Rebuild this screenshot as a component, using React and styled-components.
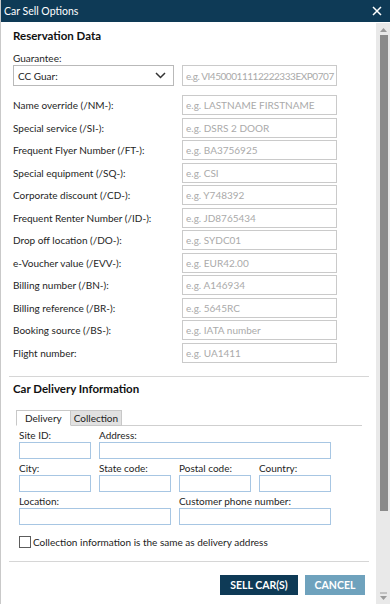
import React, { useState } from 'react';
import styled, { createGlobalStyle } from 'styled-components';

const GlobalStyle = createGlobalStyle`
  html, body {
    margin: 0;
    padding: 0;
    background: #ffffff;
  }
  * {
    box-sizing: border-box;
  }
`;

const FONT = `Lato, "Noto Sans", sans-serif`;
const NAVY = '#0e3a56';

// --- Styled Components ---

const Dialog = styled.div`
  width: 390px;
  height: 604px;
  display: flex;
  flex-direction: column;
  background: #ffffff;
  border-left: 1px solid #c9c9c9;
  font-family: ${FONT};
  color: #222;
  overflow: hidden;
`;

const TitleBar = styled.div`
  height: 22px;
  flex-shrink: 0;
  background: ${NAVY};
  display: flex;
  align-items: center;
  justify-content: space-between;
  padding: 0 6px 0 3px;
  color: #fff;
  font-size: 10.5px;
`;

const CloseButton = styled.button`
  width: 14px;
  height: 14px;
  padding: 0;
  border: none;
  background: transparent;
  display: flex;
  align-items: center;
  justify-content: center;
  cursor: pointer;
`;

const Body = styled.div`
  flex: 1;
  min-height: 0;
  display: flex;
`;

const Content = styled.div`
  flex: 1;
  min-width: 0;
  display: flex;
  flex-direction: column;
  overflow: hidden;
`;

const Section = styled.section`
  padding: ${(p) => p.$pad || '0 0 0 12px'};
  display: flex;
  flex-direction: column;
`;

const Heading = styled.h2`
  margin: 0;
  font-size: 11.5px;
  font-weight: 700;
  line-height: 16px;
  color: #111;
`;

const FieldLabel = styled.div`
  font-size: 10px;
  line-height: 14px;
  color: #1e1e1e;
  white-space: nowrap;
`;

const GuaranteeRow = styled.div`
  display: flex;
  gap: 8px;
  margin-bottom: 9px;
`;

const SelectBox = styled.div`
  position: relative;
  width: 161px;
  height: 21px;
  border: 1px solid #b9b9b9;
  display: flex;
  align-items: center;
  padding: 0 4px;
  font-size: 10px;
  color: #222;
`;

const Chevron = styled.svg`
  position: absolute;
  right: 7px;
  top: 6px;
`;

const TextField = styled.input`
  width: ${(p) => p.$w || 155}px;
  height: ${(p) => p.$h || 20}px;
  border: 1px solid ${(p) => (p.$blue ? '#a7c6e3' : '#cacaca')};
  padding: 0 1px 0 3px;
  margin: 0;
  font-family: ${FONT};
  font-size: 10px;
  letter-spacing: ${(p) => (p.$tight ? '-0.45px' : '0')};
  color: #222;
  background: #fff;
  outline: none;

  &::placeholder {
    color: #aaaaaa;
  }
`;

const FieldGrid = styled.div`
  display: grid;
  grid-template-columns: 169px 155px;
  row-gap: 2.5px;
  align-items: center;
`;

const Divider = styled.hr`
  margin: 0 7px 0 8px;
  border: none;
  border-top: 1px solid #d6d6d6;
  height: 0;
`;

const TabStrip = styled.div`
  display: flex;
  align-items: flex-end;
  margin: 12px 14px 0 3px;
  border-bottom: 1px solid #cfcfcf;
  height: 17px;
`;

const Tab = styled.button`
  height: 16px;
  margin-bottom: -1px;
  padding: 0 ${(p) => (p.$active ? 8 : 3)}px;
  border: 1px solid #c8c8c8;
  border-left-width: ${(p) => (p.$active ? 1 : 0)}px;
  border-bottom-color: ${(p) => (p.$active ? '#fff' : '#c8c8c8')};
  background: ${(p) => (p.$active ? '#fff' : '#e1e1e1')};
  font-family: ${FONT};
  font-size: 10px;
  line-height: 14px;
  color: #222;
  cursor: pointer;
`;

const TabPanel = styled.div`
  padding: 2px 0 0 6px;
  display: grid;
  grid-template-columns: repeat(4, 72px);
  column-gap: 8px;
`;

const Cell = styled.div`
  grid-column: span ${(p) => p.$span || 1};
  display: flex;
  flex-direction: column;
  margin-bottom: 2px;
`;

const CheckRow = styled.label`
  display: flex;
  align-items: center;
  gap: 2px;
  margin: 8px 0 0 6px;
  font-size: 10px;
  line-height: 14px;
  color: #222;
  cursor: pointer;
`;

const CheckBox = styled.span`
  width: 12px;
  height: 12px;
  border: 1px solid #5c5c5c;
  background: #fff;
`;

const Footer = styled.div`
  display: flex;
  justify-content: flex-end;
  gap: 7px;
  padding: 13px 11px 0 0;
`;

const ActionButton = styled.button`
  height: 20px;
  width: ${(p) => p.$w}px;
  border: none;
  padding: 0;
  background: ${(p) => (p.$primary ? NAVY : '#6fa2bd')};
  color: #fff;
  font-family: ${FONT};
  font-weight: 700;
  font-size: 10.5px;
  cursor: pointer;
`;

const Scrollbar = styled.div`
  width: 14px;
  flex-shrink: 0;
  margin-top: 1px;
  background: #e9e9e9;
  display: flex;
  flex-direction: column;
  align-items: center;
  padding: 5px 0 4px 1px;
`;

const Thumb = styled.div`
  width: 8px;
  height: 476px;
  margin-top: 3px;
  background: #8b8b8b;
`;

const Spacer = styled.div`
  flex: 1;
`;

const reservationFields = [
  ['Name override (/NM-):', 'e.g. LASTNAME FIRSTNAME'],
  ['Special service (/SI-):', 'e.g. DSRS 2 DOOR'],
  ['Frequent Flyer Number (/FT-):', 'e.g. BA3756925'],
  ['Special equipment (/SQ-):', 'e.g. CSI'],
  ['Corporate discount (/CD-):', 'e.g. Y748392'],
  ['Frequent Renter Number (/ID-):', 'e.g. JD8765434'],
  ['Drop off location (/DO-):', 'e.g. SYDC01'],
  ['e-Voucher value (/EVV-):', 'e.g. EUR42.00'],
  ['Billing number (/BN-):', 'e.g. A146934'],
  ['Billing reference (/BR-):', 'e.g. 5645RC'],
  ['Booking source (/BS-):', 'e.g. IATA number'],
  ['Flight number:', 'e.g. UA1411'],
];

const deliveryFields = [
  ['Site ID:', 1, 72],
  ['Address:', 3, 232],
  ['City:', 1, 72],
  ['State code:', 1, 72],
  ['Postal code:', 1, 72],
  ['Country:', 1, 72],
  ['Location:', 2, 152],
  ['Customer phone number:', 2, 152],
];

const App = () => {
  const [tab, setTab] = useState('delivery');

  return (
    <>
      <GlobalStyle />
      <Dialog>
        <TitleBar>
          <span>Car Sell Options</span>
          <CloseButton aria-label="Close">
            <svg width="10" height="10" viewBox="0 0 10 10">
              <path d="M1 1 L9 9 M9 1 L1 9" stroke="#fff" strokeWidth="1.5" />
            </svg>
          </CloseButton>
        </TitleBar>
        <Body>
          <Content>
            <Section $pad="6px 0 0 12px">
              <Heading>Reservation Data</Heading>
              <FieldLabel style={{ marginTop: 7 }}>Guarantee:</FieldLabel>
              <GuaranteeRow>
                <SelectBox>
                  CC Guar:
                  <Chevron width="11" height="7" viewBox="0 0 11 7">
                    <path d="M1 1 L5.5 5.5 L10 1" fill="none" stroke="#333" strokeWidth="1.5" />
                  </Chevron>
                </SelectBox>
                <TextField $h={21} $tight placeholder="e.g. VI4500011112222333EXP0707" />
              </GuaranteeRow>
              <FieldGrid>
                {reservationFields.map(([label, hint]) => (
                  <React.Fragment key={label}>
                    <FieldLabel>{label}</FieldLabel>
                    <TextField placeholder={hint} />
                  </React.Fragment>
                ))}
              </FieldGrid>
            </Section>

            <Divider style={{ marginTop: 13 }} />

            <Section $pad="4px 0 0 12px">
              <Heading>Car Delivery Information</Heading>
              <TabStrip>
                <Tab $active={tab === 'delivery'} onClick={() => setTab('delivery')}>
                  Delivery
                </Tab>
                <Tab $active={tab === 'collection'} onClick={() => setTab('collection')}>
                  Collection
                </Tab>
              </TabStrip>
              <TabPanel>
                {deliveryFields.map(([label, span, w]) => (
                  <Cell key={label} $span={span}>
                    <FieldLabel>{label}</FieldLabel>
                    <TextField $blue $w={w} $h={17} />
                  </Cell>
                ))}
              </TabPanel>
              <CheckRow>
                <CheckBox />
                Collection information is the same as delivery address
              </CheckRow>
            </Section>

            <Divider style={{ marginTop: 12 }} />

            <Footer>
              <ActionButton $primary $w={78}>SELL CAR(S)</ActionButton>
              <ActionButton $w={60}>CANCEL</ActionButton>
            </Footer>
          </Content>
          <Scrollbar>
            <svg width="7" height="4" viewBox="0 0 7 4">
              <path d="M0 4 L3.5 0 L7 4 Z" fill="#9a9a9a" />
            </svg>
            <Thumb />
            <Spacer />
            <svg width="7" height="8" viewBox="0 0 7 8">
              <path d="M0 1 H7" stroke="#9a9a9a" strokeWidth="1" />
              <path d="M0 4 L3.5 8 L7 4 Z" fill="#9a9a9a" />
            </svg>
          </Scrollbar>
        </Body>
      </Dialog>
    </>
  );
};

export default App;
